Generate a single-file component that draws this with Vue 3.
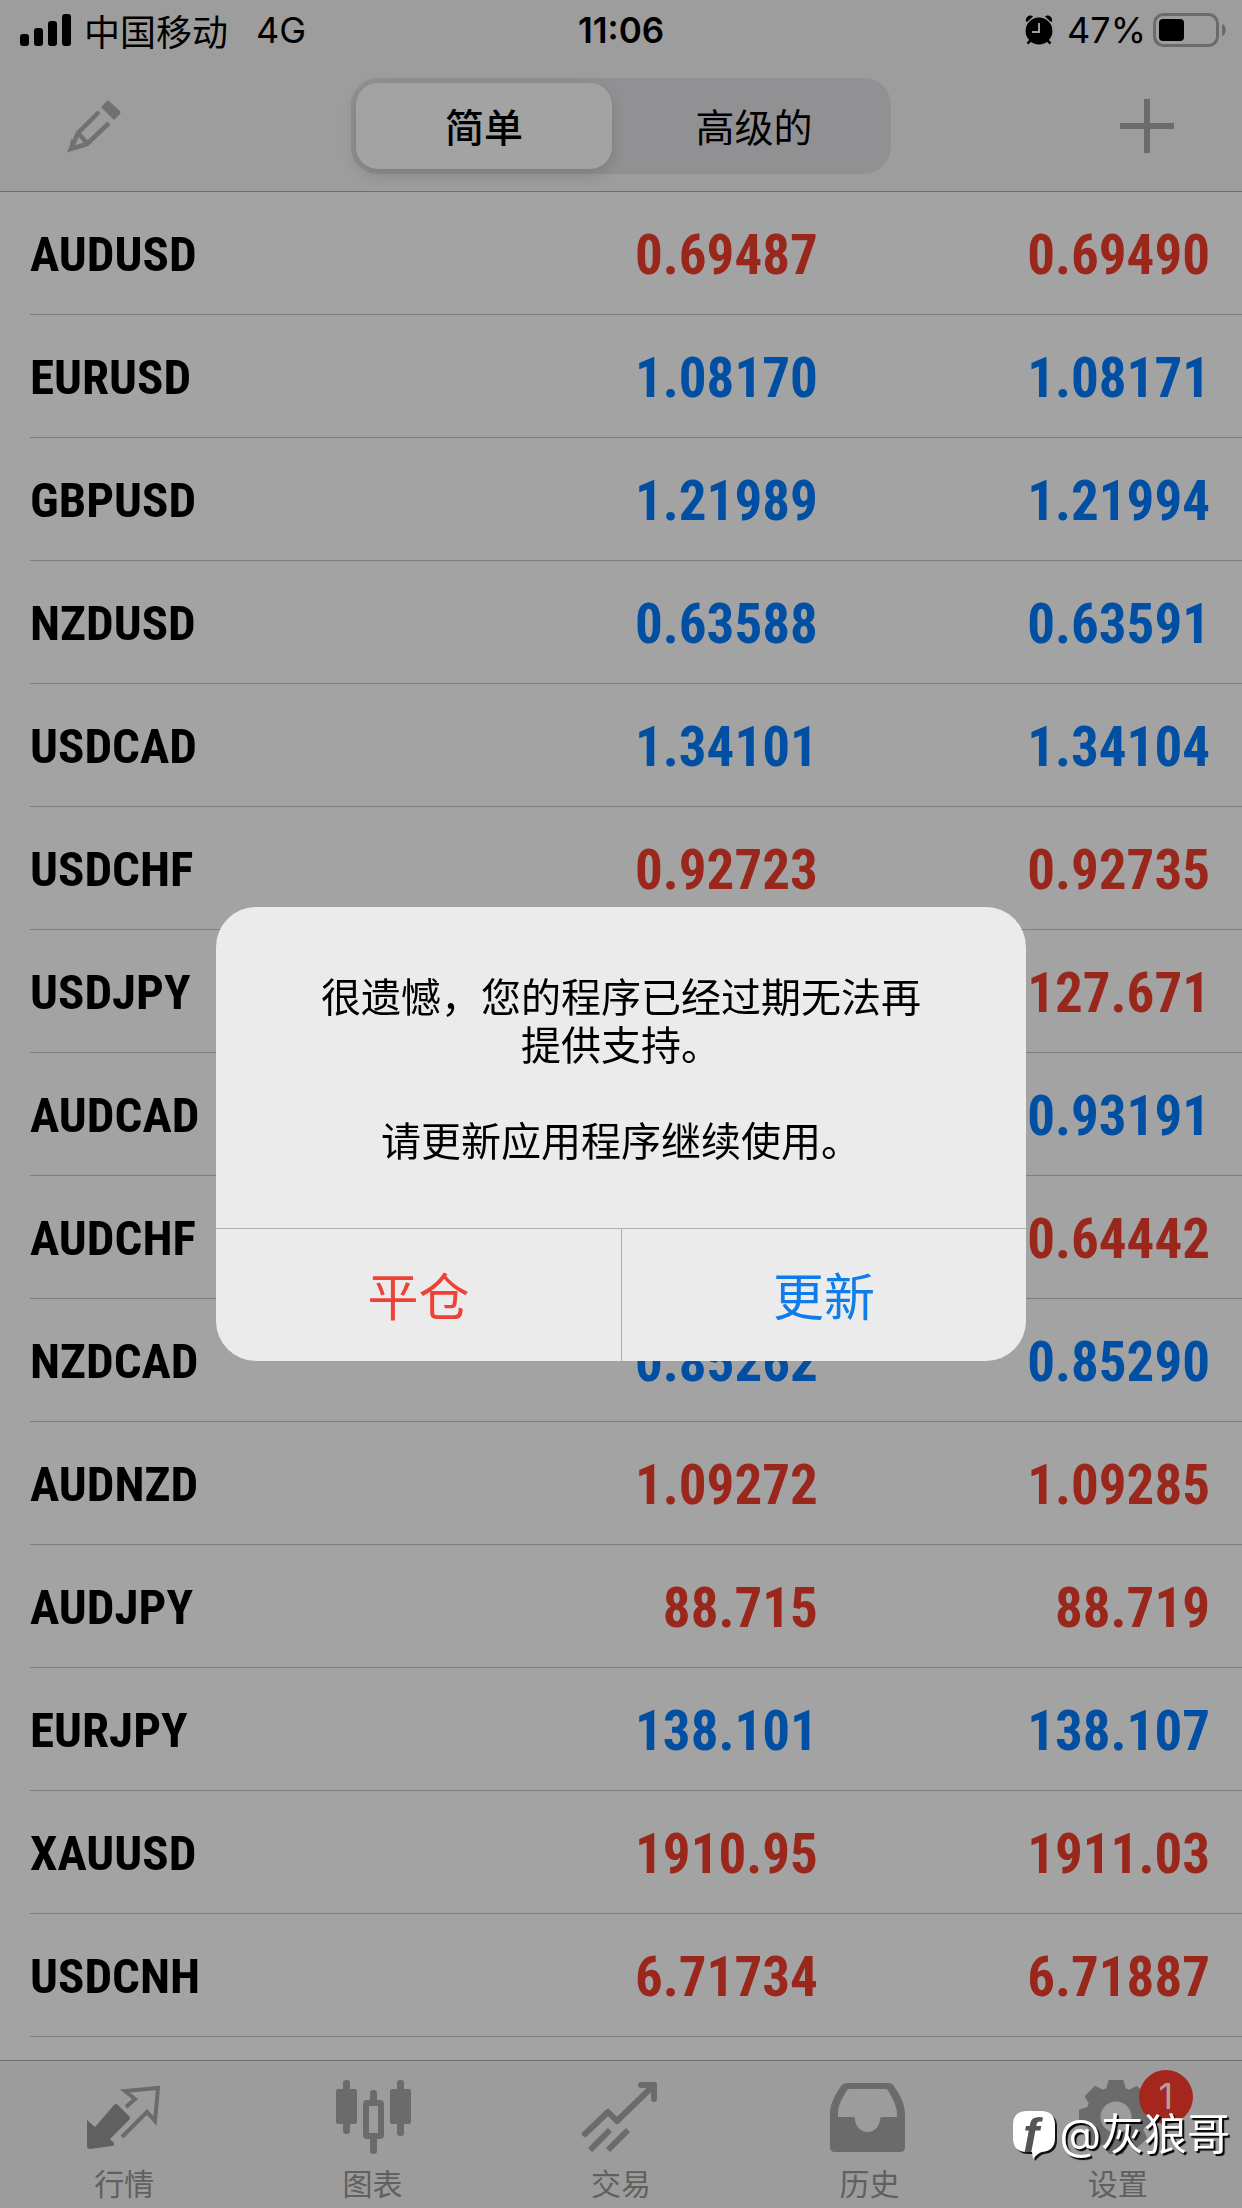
<template>
  <div class="app">
    <header class="top">
      <div class="statusBar">
        <div class="statusLeft">
          <svg class="signal" viewBox="0 0 52 34" aria-hidden="true">
            <rect x="0" y="21" width="9" height="12" rx="3" />
            <rect x="14" y="15" width="9" height="18" rx="3" />
            <rect x="28" y="8" width="9" height="25" rx="3" />
            <rect x="42" y="1" width="9" height="32" rx="3" />
          </svg>
          <span class="carrier">中国移动</span>
          <span>4G</span>
        </div>
        <div class="clock">11:06</div>
        <div class="statusRight">
          <svg class="alarm" viewBox="0 0 28 30" aria-hidden="true">
            <circle cx="14" cy="16" r="13.4" />
            <path d="M1 6.500C0 2 5 -1 8 1.500L2 7zM27 6.500C28 2 23 -1 20 1.500L26 7z" />
            <path d="M6 25L2.500 28.500M22 25L25.500 28.500" stroke="#000" stroke-width="2.500" />
            <path d="M14 8V17H7" fill="none" stroke="#9d9d9d" stroke-width="2" />
          </svg>
          <span>47%</span>
          <svg class="battery" viewBox="0 0 74 34" aria-hidden="true">
            <rect x="1.500" y="1.500" width="63" height="31" rx="9" fill="none" stroke="#6b6b6b" stroke-width="3" />
            <rect x="6" y="6" width="25" height="22" rx="4" />
            <path d="M69 11C74 12 74 22 69 23z" fill="#6b6b6b" />
          </svg>
        </div>
      </div>
      <div class="navBar">
        <button class="iconButton" aria-label="编辑">
          <svg viewBox="0 0 56 56" aria-hidden="true">
            <path d="M34 9L40 3Q41 2 42 3L53 13Q54 15 53 16L47 22z" fill="#717171" />
            <path d="M32 14L11 35L4 51L20 46L42 25M11 35L21 46" fill="none" stroke="#717171" stroke-width="4.500" />
            <path d="M2 53L4 41L8 43L7 48L14 46L18 49z" fill="#717171" />
          </svg>
        </button>
        <div class="segmented">
          <button
            v-for="modo in modos"
            :key="modo"
            :class="['segment', { active: modo === modoActivo }]"
            @click="modoActivo = modo"
          >
            {{ modo }}
          </button>
        </div>
        <button class="iconButton" aria-label="添加">
          <svg viewBox="0 0 56 56" aria-hidden="true">
            <path d="M28 1V55M1 28H55" stroke="#6b6b6b" stroke-width="6" />
          </svg>
        </button>
      </div>
    </header>

    <main class="quotes">
      <table>
        <tbody>
          <tr v-for="q in quotes" :key="q.symbol">
            <th scope="row">{{ q.symbol }}</th>
            <td :class="q.trend">{{ q.bid }}</td>
            <td :class="['ask', q.trend]">{{ q.ask }}</td>
          </tr>
        </tbody>
      </table>
    </main>

    <nav class="tabBar">
      <a v-for="tab in tabs" :key="tab.id" href="#" class="tab" :class="tab.id">
        <span class="tabIcon">
          <svg viewBox="0 0 80 80" aria-hidden="true">
            <template v-if="tab.id === 'market'">
              <path d="M3 44L11 51L30 29Q32 27 34 29L45 40Q47 42 45 44L26 63L30 67Q31 69 28 70L6 73Q3 73 3 70z" fill="#606060" />
              <path d="M42 31L51 23L41 15L74 12L71 45L63 36L38 61" class="line thin" />
            </template>
            <template v-else-if="tab.id === 'chart'">
              <rect x="3" y="13" width="21" height="35" rx="2" />
              <rect x="10" y="4" width="7" height="54" rx="3" />
              <rect x="57" y="13" width="21" height="35" rx="2" />
              <rect x="64" y="4" width="7" height="56" rx="3" />
              <rect x="37" y="14" width="7" height="14" rx="3" />
              <rect x="37" y="60" width="7" height="18" rx="3" />
              <rect x="33" y="27" width="15" height="33" rx="1" class="line" />
            </template>
            <template v-else-if="tab.id === 'trade'">
              <path d="M4 58L27 36L36 45L73 9" class="line round" />
              <path d="M60 9H73V23" class="line round" />
              <path d="M9 74L29 54M27 74L47 54" class="line" />
            </template>
            <path
              v-else-if="tab.id === 'history'"
              fill-rule="evenodd"
              d="M19 7H59Q63 7 65 10C71 19 76 28 76 38V71Q76 76 71 76H6Q1 76 1 71V38C1 28 6 19 12 10Q14 7 19 7zM21 13Q18 13 17 16C12 24 9 30 9 38V41H24Q26 41 26 44C28 60 49 60 51 44Q51 41 53 41H68V38C68 30 64 24 60 16Q59 13 56 13z"
            />
            <path v-else fill-rule="evenodd" :d="gearPath" class="gear" />
          </svg>
          <span v-if="tab.badge" class="badge">{{ tab.badge }}</span>
        </span>
        <span class="tabLabel">{{ tab.label }}</span>
      </a>
    </nav>

    <div class="overlay">
      <div class="dialog" role="alertdialog" aria-describedby="mensaje">
        <div id="mensaje" class="message">
          <p>很遗憾，您的程序已经过期无法再<br />提供支持。</p>
          <p>请更新应用程序继续使用。</p>
        </div>
        <div class="actions">
          <button class="danger">平仓</button>
          <button class="primary">更新</button>
        </div>
      </div>
    </div>

    <div class="watermark">
      <svg viewBox="0 0 46 52" aria-hidden="true">
        <path d="M17 3H31Q45 3 45 17V30Q45 43 32 44Q28 45 23 51L22 44H17Q3 44 3 30V17Q3 3 17 3z" fill="#111" />
        <path d="M15 1H29Q43 1 43 15V28Q43 41 30 42Q26 43 21 49L20 42H15Q1 42 1 28V15Q1 1 15 1z" fill="#fff" />
        <text x="11" y="42" class="mark">f</text>
      </svg>
      <span>@灰狼哥</span>
    </div>
  </div>
</template>

<script setup>
import { ref } from "vue";

const modos = ["简单", "高级的"];
const modoActivo = ref("简单");

const quotes = [
  { symbol: "AUDUSD", bid: "0.69487", ask: "0.69490", trend: "down" },
  { symbol: "EURUSD", bid: "1.08170", ask: "1.08171", trend: "up" },
  { symbol: "GBPUSD", bid: "1.21989", ask: "1.21994", trend: "up" },
  { symbol: "NZDUSD", bid: "0.63588", ask: "0.63591", trend: "up" },
  { symbol: "USDCAD", bid: "1.34101", ask: "1.34104", trend: "up" },
  { symbol: "USDCHF", bid: "0.92723", ask: "0.92735", trend: "down" },
  { symbol: "USDJPY", bid: "127.668", ask: "127.671", trend: "down" },
  { symbol: "AUDCAD", bid: "0.93177", ask: "0.93191", trend: "up" },
  { symbol: "AUDCHF", bid: "0.64428", ask: "0.64442", trend: "down" },
  { symbol: "NZDCAD", bid: "0.85262", ask: "0.85290", trend: "up" },
  { symbol: "AUDNZD", bid: "1.09272", ask: "1.09285", trend: "down" },
  { symbol: "AUDJPY", bid: "88.715", ask: "88.719", trend: "down" },
  { symbol: "EURJPY", bid: "138.101", ask: "138.107", trend: "up" },
  { symbol: "XAUUSD", bid: "1910.95", ask: "1911.03", trend: "down" },
  { symbol: "USDCNH", bid: "6.71734", ask: "6.71887", trend: "down" },
];

const tabs = [
  { id: "market", label: "行情" },
  { id: "chart", label: "图表" },
  { id: "trade", label: "交易" },
  { id: "history", label: "历史" },
  { id: "settings", label: "设置", badge: 1 },
];

// engranaje de 8 dientes con el hueco en el centro
function crearEngranaje(cx, cy) {
  const puntos = [];
  for (let i = 0; i < 8; i++) {
    for (const [grados, radio] of [[-17, 29], [-10, 36], [10, 36], [17, 29]]) {
      const a = ((i * 45 + grados) * Math.PI) / 180;
      puntos.push(`${(cx + radio * Math.sin(a)).toFixed(1)} ${(cy - radio * Math.cos(a)).toFixed(1)}`);
    }
  }
  return `M${puntos.join("L")}zM${cx - 17} ${cy}a17 17 0 1 0 34 0a17 17 0 1 0 -34 0z`;
}
const gearPath = crearEngranaje(38, 41);
</script>

<style>
body {
  margin: 0;
  background-color: #a3a3a3;
}
</style>

<style scoped>
.app {
  min-height: 100vh;
  display: flex;
  flex-direction: column;
  position: relative;
  background-color: #a3a3a3;
  color: #000;
  font-family: Inter, "Noto Sans CJK SC", sans-serif;
}
button {
  border: 0;
  padding: 0;
  background: none;
  font-family: inherit;
  color: inherit;
  cursor: pointer;
}
svg {
  display: block;
}
.top {
  height: 192px;
  box-sizing: border-box;
  background-color: #9d9d9d;
  border-bottom: 1px solid #6f6f6f;
}
.statusBar {
  height: 60px;
  display: grid;
  grid-template-columns: 1fr auto 1fr;
  align-items: center;
  padding: 0 15px;
  font-size: 36px;
}
.statusLeft,
.statusRight {
  display: flex;
  align-items: center;
}
.signal {
  width: 52px;
  height: 34px;
  margin-left: 5px;
}
.carrier {
  margin: 0 28px 0 12px;
}
.clock {
  font-size: 35px;
  font-weight: 600;
}
.statusRight {
  justify-content: flex-end;
}
.alarm {
  width: 28px;
  height: 30px;
  margin-right: 14px;
}
.battery {
  width: 74px;
  height: 34px;
  margin-left: 7px;
}
.navBar {
  height: 131px;
  display: flex;
  align-items: center;
  justify-content: space-between;
  padding: 0 67px;
}
.iconButton svg {
  width: 56px;
  height: 56px;
}
.segmented {
  width: 540px;
  height: 96px;
  box-sizing: border-box;
  padding: 5px;
  display: grid;
  grid-template-columns: 256px 1fr;
  gap: 10px;
  border-radius: 27px;
  background-color: #919193;
}
.segment {
  padding-bottom: 2px;
  font-size: 39px;
  border-radius: 22px;
}
.segment.active {
  font-weight: 500;
  background-color: #a3a3a3;
  box-shadow: 0 6px 16px 0 rgba(0, 0, 0, 0.14);
}
.quotes {
  flex: 1;
  padding-left: 30px;
}
table {
  width: 100%;
  table-layout: fixed;
  border-collapse: separate;
  border-spacing: 0;
  font-family: "Roboto Condensed", "Liberation Sans Narrow", "Liberation Sans", sans-serif;
  font-weight: bold;
}
th,
td {
  height: 123px;
  box-sizing: border-box;
  padding: 3px 0 0;
  border-bottom: 1px solid #7f7f7f;
  text-align: right;
  font-size: 55px;
  line-height: 64px;
}
th {
  text-align: left;
  font-size: 49px;
}
td.ask {
  width: 35%;
  padding-right: 32px;
}
.down {
  color: #9a271c;
}
.up {
  color: #004fa3;
}
.tabBar {
  height: 148px;
  box-sizing: border-box;
  display: grid;
  grid-template-columns: repeat(5, 1fr);
  background-color: #9c9c9c;
  border-top: 1px solid #6f6f6f;
}
.tab {
  display: flex;
  flex-direction: column;
  align-items: center;
  padding-top: 15px;
  text-decoration: none;
  color: #606060;
}
.tabIcon {
  position: relative;
}
.tabIcon svg {
  width: 80px;
  height: 80px;
  fill: #6b6b6b;
}
.tabIcon .line {
  fill: none;
  stroke: #6b6b6b;
  stroke-width: 6;
}
.tabIcon .thin {
  stroke-width: 4;
}
.tabIcon .round {
  stroke-linecap: round;
  stroke-linejoin: round;
}
.gear {
  stroke: #6b6b6b;
  stroke-width: 3;
  stroke-linejoin: round;
}
.tabLabel {
  font-size: 30px;
  line-height: 48px;
  margin-top: 4px;
}
.badge {
  position: absolute;
  left: 61px;
  top: -6px;
  width: 54px;
  height: 54px;
  border-radius: 50%;
  background-color: #a5261d;
  color: #b3a09e;
  font-size: 36px;
  line-height: 52px;
  text-align: center;
}
.overlay {
  position: fixed;
  inset: 0;
  padding-top: 60px;
  display: flex;
  align-items: center;
  justify-content: center;
}
.dialog {
  width: 810px;
  border-radius: 40px;
  overflow: hidden;
  background-color: #ebebec;
}
.message {
  padding: 67px 48px 62px;
  text-align: center;
  font-size: 40px;
  line-height: 48px;
}
.message p {
  margin: 0;
}
.message p + p {
  margin-top: 48px;
}
.actions {
  display: grid;
  grid-template-columns: 1fr 1fr;
  border-top: 1px solid #b0b0b2;
}
.actions button {
  height: 132px;
  padding-bottom: 3px;
  font-size: 51px;
}
.actions button + button {
  border-left: 1px solid #b0b0b2;
}
.danger {
  color: #ee4238;
}
.primary {
  color: #0f7ceb;
}
.watermark {
  position: absolute;
  right: 12px;
  bottom: 38px;
  display: flex;
  align-items: center;
  gap: 1px;
  color: #fff;
  font-size: 43px;
  line-height: 64px;
  text-shadow: 2px 2px 1px #000;
}
.watermark span {
  padding-bottom: 4px;
}
.watermark svg {
  width: 46px;
  height: 52px;
}
.mark {
  font-family: "Liberation Sans", sans-serif;
  font-size: 48px;
  font-weight: bold;
  font-style: italic;
  fill: #555;
  text-shadow: none;
}
</style>
